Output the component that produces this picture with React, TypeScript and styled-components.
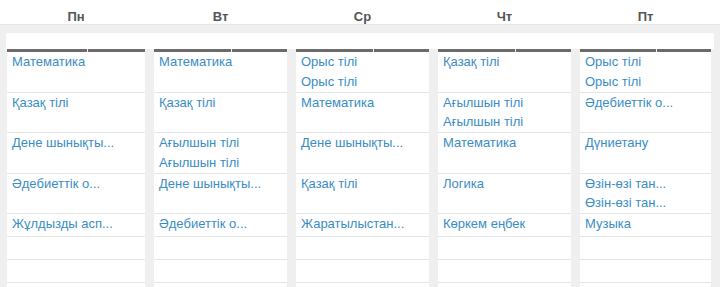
import React from "react";
import styled, { createGlobalStyle } from "styled-components";

const GlobalStyle = createGlobalStyle`
  html, body {
    margin: 0;
    padding: 0;
    background: #ffffff;
    font-family: "Liberation Sans", Arial, sans-serif;
  }
`;

const COLS = [138, 133, 133, 133, 131];

type Day = { name: string; lessons: string[][] };

const DAYS: Day[] = [
  {
    name: "Пн",
    lessons: [
      ["Математика"],
      ["Қазақ тілі"],
      ["Дене шынықты..."],
      ["Әдебиеттік о..."],
      ["Жұлдызды асп..."],
    ],
  },
  {
    name: "Вт",
    lessons: [
      ["Математика"],
      ["Қазақ тілі"],
      ["Ағылшын тілі", "Ағылшын тілі"],
      ["Дене шынықты..."],
      ["Әдебиеттік о..."],
    ],
  },
  {
    name: "Ср",
    lessons: [
      ["Орыс тілі", "Орыс тілі"],
      ["Математика"],
      ["Дене шынықты..."],
      ["Қазақ тілі"],
      ["Жаратылыстан..."],
    ],
  },
  {
    name: "Чт",
    lessons: [
      ["Қазақ тілі"],
      ["Ағылшын тілі", "Ағылшын тілі"],
      ["Математика"],
      ["Логика"],
      ["Көркем еңбек"],
    ],
  },
  {
    name: "Пт",
    lessons: [
      ["Орыс тілі", "Орыс тілі"],
      ["Әдебиеттік о..."],
      ["Дүниетану"],
      ["Өзін-өзі тан...", "Өзін-өзі тан..."],
      ["Музыка"],
    ],
  },
];

const ROWS = 8;

const App = () => {
  return (
    <>
      <GlobalStyle />
      <Page>
        <DayHeader>
          {DAYS.map((d, i) => (
            <DayName key={d.name} w={COLS[i]}>
              {d.name}
            </DayName>
          ))}
        </DayHeader>
        <Board>
          <TopBar />
          <Grid>
            {DAYS.map((d) => (
              <HeadCell key={"h" + d.name}>
                <HeadPart />
                <HeadPart />
              </HeadCell>
            ))}
            {Array.from({ length: ROWS }).map((_, r) =>
              DAYS.map((d) => (
                <Cell key={d.name + r}>
                  {(d.lessons[r] || []).map((l, k) => (
                    <Lesson key={k}>{l}</Lesson>
                  ))}
                </Cell>
              ))
            )}
          </Grid>
        </Board>
      </Page>
    </>
  );
};
export default App;

const Page = styled.div`
  width: 720px;
  height: 287px;
  overflow: hidden;
  background: #ffffff;
`;

const DayHeader = styled.div`
  display: flex;
  gap: 9px;
  padding: 9px 0 0 7px;
  height: 15px;
`;

const DayName = styled.div<{ w: number }>`
  width: ${(p) => p.w}px;
  text-align: center;
  font-size: 13px;
  line-height: 15px;
  font-weight: 700;
  color: #555555;
`;

const Board = styled.div`
  background: #efefef;
  border-top: 1px solid #e6e6e6;
  padding: 8px 6px 0 6px;
  height: 100%;
`;

const TopBar = styled.div`
  height: 16px;
  background: #ffffff;
`;

const Grid = styled.div`
  display: grid;
  grid-template-columns: ${COLS.map((c) => c + "px").join(" ")};
  column-gap: 9px;
  padding-left: 1px;
`;

const HeadCell = styled.div`
  display: flex;
  gap: 1px;
  background: #f4f4f4;
  height: 3px;
`;

const HeadPart = styled.div`
  height: 3px;
  background: #6b6b6b;
  &:first-child {
    flex: 0 0 58%;
  }
  &:last-child {
    flex: 1;
  }
`;

const Cell = styled.div`
  background: #ffffff;
  border-bottom: 1px solid #e4e4e4;
  min-height: 22px;
  padding: 0 5px;
`;

const Lesson = styled.div`
  font-size: 13px;
  line-height: 19.75px;
  color: #3a8cc4;
  white-space: nowrap;
`;
